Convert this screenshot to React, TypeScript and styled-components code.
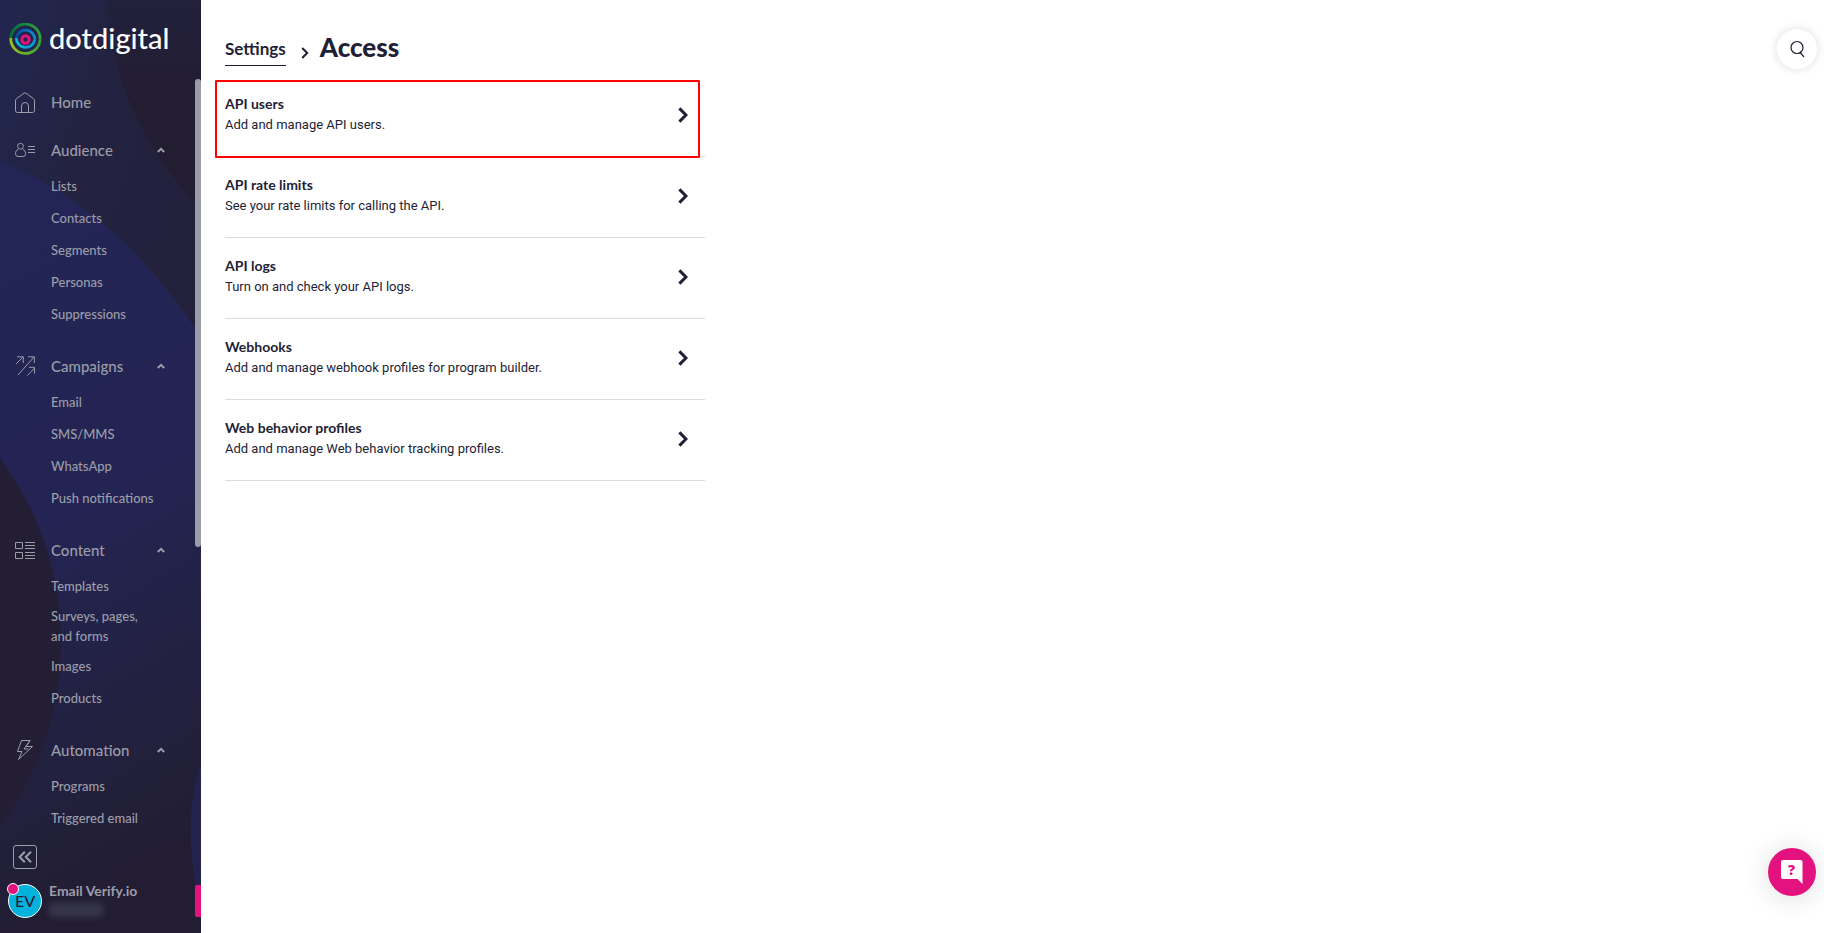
import React from "react";
import styled, { createGlobalStyle, css } from "styled-components";

const GlobalStyle = createGlobalStyle`
  *, *::before, *::after { box-sizing: border-box; }
  body { margin: 0; background: #fff; color: #221e35; font-family: Lato, "Liberation Sans", sans-serif; }
  a { color: inherit; text-decoration: none; }
  button { margin: 0; padding: 0; border: 0; background: none; color: inherit; font: inherit; cursor: pointer; }
  ul { margin: 0; padding: 0; list-style: none; }
  svg { display: block; }
`;

const Shell = styled.div`
  display: flex;
  min-height: 100vh;
`;

const Sidebar = styled.aside`
  position: sticky;
  top: 0;
  isolation: isolate;
  display: flex;
  flex-direction: column;
  flex: none;
  width: 201px;
  height: 100vh;
  overflow: hidden;
  color: #9b9da9;
`;

const Backdrop = styled.svg`
  position: absolute;
  inset: 0;
  z-index: -1;
  width: 100%;
  height: 100%;
`;

const Brand = styled.a`
  display: flex;
  align-items: center;
  flex: none;
  gap: 7px;
  height: 79px;
  padding-left: 9px;
  color: #fff;
`;

const BrandName = styled.span`
  padding-bottom: 4px;
  font-size: 29px;
  font-weight: 500;
  line-height: 32px;
`;

const NavArea = styled.div`
  display: flex;
  flex: 1;
  min-height: 0;
`;

const Nav = styled.nav`
  display: flex;
  flex: 1;
  flex-direction: column;
  gap: 8px;
  padding-top: 3px;
  overflow: hidden;
`;

const ScrollThumb = styled.div`
  width: 6px;
  height: 62%;
  border-radius: 3px;
  background: #9a9da8;
`;

const Section = styled.section`
  flex: none;
`;

const navHead = css`
  display: flex;
  align-items: center;
  flex: none;
  width: 100%;
  height: 40px;
  padding: 0 30px 0 14px;
  font-size: 15px;
  font-weight: 500;
  line-height: 20px;
  text-align: left;
`;

const HeadLink = styled.a`${navHead}`;
const HeadButton = styled.button`${navHead}`;

const HeadLabel = styled.span`
  flex: 1;
  padding-left: 15px;
`;

const SubList = styled.ul`
  padding: 0 0 8px 51px;
`;

const SubItem = styled.li`
  display: flex;
  align-items: center;
  min-height: 32px;
  padding: 4px 0;
`;

const ItemLink = styled.a`
  font-size: 13px;
  font-weight: 500;
  line-height: 20px;
  white-space: pre-line;
`;

const Footer = styled.footer`
  display: flex;
  flex: none;
  flex-direction: column;
  align-items: flex-start;
  gap: 15px;
  height: 99px;
  padding-top: 11px;
`;

const CollapseButton = styled.button`
  display: grid;
  place-items: center;
  width: 24px;
  height: 24px;
  margin-left: 13px;
  border: 1px solid #9b9da9;
  border-radius: 3px;
`;

const Account = styled.div`
  display: flex;
  align-items: center;
  align-self: stretch;
  height: 34px;
  padding-left: 8px;
`;

const Avatar = styled.button`
  position: relative;
  flex: none;
  width: 34px;
  height: 34px;
  border: 1px solid #fff;
  border-radius: 50%;
  background: #00b2dc;
  color: #221e35;
  font-size: 16px;
  font-weight: 500;
  line-height: 32px;
`;

const Alert = styled.span`
  position: absolute;
  top: -2px;
  left: -2px;
  width: 12px;
  height: 12px;
  border: 1px solid #fff;
  border-radius: 50%;
  background: #e3127e;
`;

const Identity = styled.div`
  flex: 1;
  padding: 0 0 2px 7px;
  font-size: 14px;
  font-weight: 700;
  line-height: 16px;
`;

const MaskedId = styled.div`
  width: 54px;
  height: 14px;
  margin-top: 4px;
  border-radius: 4px;
  background: #373649;
  filter: blur(3px);
`;

const Flag = styled.div`
  width: 6px;
  height: 32px;
  border-radius: 2px 0 0 2px;
  background: #e3127e;
`;

const Main = styled.main`
  flex: 1;
  min-width: 0;
  padding: 0 24px;
`;

const Crumbs = styled.header`
  display: flex;
  align-items: flex-start;
  height: 76px;
  padding-top: 31px;
`;

const CrumbLink = styled.a`
  margin-top: 6px;
  padding-bottom: 4px;
  border-bottom: 1px solid #221e35;
  font-size: 17px;
  font-weight: 700;
  line-height: 24px;
`;

const CrumbArrow = styled.svg`
  margin: 16px 11px 0 15px;
`;

const Title = styled.h1`
  margin: 0;
  font-size: 26px;
  font-weight: 900;
  line-height: 32px;
`;

const OptionList = styled.ul`
  max-width: 480px;
`;

const Option = styled.li<{ $marked?: boolean }>`
  position: relative;
  border-bottom: 1px solid #dcdcdf;
  ${({ $marked }) => $marked && css`
    &::after {
      content: "";
      position: absolute;
      inset: 4px 5px -2px -10px;
      border: 2px solid #ff0000;
      border-radius: 1px;
      pointer-events: none;
    }
  `}
`;

const OptionLink = styled.a`
  display: flex;
  align-items: center;
  justify-content: space-between;
  height: 80px;
  padding: 0 17px 2px 0;
`;

const OptionName = styled.h2`
  margin: 0;
  font-size: 14px;
  font-weight: 700;
  line-height: 20px;
`;

const OptionText = styled.p`
  margin: 0;
  padding: 1px 0;
  font-family: Roboto, "Liberation Sans", sans-serif;
  font-size: 13px;
  line-height: 20px;
`;

const floating = css`
  position: fixed;
  display: grid;
  place-items: center;
  border-radius: 50%;
`;

const SearchButton = styled.button`
  ${floating}
  top: 29px;
  right: 7px;
  width: 40px;
  height: 40px;
  background: #fff;
  box-shadow: 0 0 10px rgba(34, 30, 53, 0.15);
`;

const HelpButton = styled.button`
  ${floating}
  right: 8px;
  bottom: 37px;
  width: 48px;
  height: 48px;
  background: #e3127e;
  box-shadow: 0 2px 28px rgba(0, 0, 0, 0.14);
`;

const BubbleMark = styled.text`
  font-family: "Open Sans", sans-serif;
  font-size: 14px;
  font-weight: 800;
`;

const LogoMark = () => (
  <svg width="33" height="33" viewBox="0 0 33 33" fill="none" aria-hidden="true">
    <defs>
      <linearGradient id="ringGreen" x1="0" y1="0" x2="1" y2="0">
        <stop offset="0" stopColor="#00703c" />
        <stop offset="1" stopColor="#35a23a" />
      </linearGradient>
      <linearGradient id="ringLime" x1="0" y1="0" x2="1" y2="0">
        <stop offset="0" stopColor="#95c11f" />
        <stop offset="1" stopColor="#38a038" />
      </linearGradient>
      <linearGradient id="ringBlue" x1="0" y1="0" x2="1" y2="0">
        <stop offset="0" stopColor="#0a4a9e" />
        <stop offset="1" stopColor="#0a8fd0" />
      </linearGradient>
      <linearGradient id="ringCyan" x1="0" y1="0" x2="1" y2="0">
        <stop offset="0" stopColor="#00b9dc" />
        <stop offset="1" stopColor="#1192d2" />
      </linearGradient>
    </defs>
    <path d="M1.8 15A14.6 14.6 0 0 1 31.1 16.5" stroke="url(#ringGreen)" strokeWidth="2.8" />
    <path d="M31.1 16.5A14.6 14.6 0 0 1 1.8 15" stroke="url(#ringLime)" strokeWidth="2.8" />
    <path d="M7.3 15A9.3 9.3 0 0 1 25.8 16.5" stroke="url(#ringBlue)" strokeWidth="2.8" />
    <path d="M25.8 16.5A9.3 9.3 0 0 1 7.3 15" stroke="url(#ringCyan)" strokeWidth="2.8" />
    <circle cx="16.5" cy="16.5" r="3.7" stroke="#e3127e" strokeWidth="3" />
  </svg>
);

const iconShapes: Record<string, React.ReactNode> = {
  Home: <path d="M3.5 21.5Q1.5 21.5 1.5 19.5V9.2Q1.5 8.4 2.2 7.9L10 2.2Q11 1.5 12 2.2L19.8 7.9Q20.5 8.4 20.5 9.2V19.5Q20.5 21.5 18.5 21.5ZM7.5 21.5V15a3.5 3.5 0 0 1 7 0V21.5" />,
  Audience: (
    <>
      <circle cx="6.5" cy="7.2" r="2.9" />
      <path d="M4.4 10.3C2.5 11 1.4 12.5 1.5 14.8Q1.6 17.5 4 17.5H9.2Q11.6 17.5 11.6 14.8C11.6 12.5 10.5 11 8.6 10.3" />
      <path d="M14 7.5h7M14 10.5h7M14 13.5h7" />
    </>
  ),
  Campaigns: <path d="M2 9L9 2M3 1.8h6.3V8M4 20L20 2M14 1.8h6.3V8M13.5 20.5l7-7.5M15 12.3h5.5V18.5" />,
  Content: (
    <>
      <path d="M1.5 3.5h7v6h-7zM1.5 13.5h7v6h-7z" />
      <path d="M11 3.5h10M11 6.5h10M11 9.500h10M11 13.5h10M11 16.5h10M11 19.5h10" />
    </>
  ),
  Automation: <path d="M7.5 1.5H16L12 7.5h6.5L4.5 20.5 8 12.5H3.5ZM16 1.5L10 10h4.5" />,
};

const NavIcon = ({ name }: { name: string }) => (
  <svg width="22" height="22" viewBox="0 0 22 22" fill="none" stroke="currentColor" strokeWidth="1" aria-hidden="true">
    {iconShapes[name]}
  </svg>
);

const CaretUp = () => (
  <svg width="8" height="6" viewBox="0 0 8 6" fill="none" stroke="currentColor" strokeWidth="2" aria-hidden="true">
    <path d="M.8 5L4 1.8 7.2 5" />
  </svg>
);

const sections: { name: string; items: string[] }[] = [
  { name: "Audience", items: ["Lists", "Contacts", "Segments", "Personas", "Suppressions"] },
  { name: "Campaigns", items: ["Email", "SMS/MMS", "WhatsApp", "Push notifications"] },
  { name: "Content", items: ["Templates", "Surveys, pages,\nand forms", "Images", "Products"] },
  { name: "Automation", items: ["Programs", "Triggered email"] },
];

const options = [
  { name: "API users", text: "Add and manage API users.", marked: true },
  { name: "API rate limits", text: "See your rate limits for calling the API." },
  { name: "API logs", text: "Turn on and check your API logs." },
  { name: "Webhooks", text: "Add and manage webhook profiles for program builder." },
  { name: "Web behavior profiles", text: "Add and manage Web behavior tracking profiles." },
];

const SidebarArt = () => (
  <Backdrop viewBox="0 0 201 933" preserveAspectRatio="none" aria-hidden="true">
    <defs>
      <linearGradient id="base" x1="0" y1="0" x2="0.6" y2="1">
        <stop offset="0" stopColor="#22264f" />
        <stop offset="0.3" stopColor="#232240" />
        <stop offset="1" stopColor="#221e35" />
      </linearGradient>
      <linearGradient id="orb" x1="0" y1="0" x2="0.15" y2="1">
        <stop offset="0" stopColor="#232556" />
        <stop offset="0.5" stopColor="#232453" />
        <stop offset="0.85" stopColor="#22203c" />
        <stop offset="1" stopColor="#221d33" />
      </linearGradient>
      <linearGradient id="corner" x1="0" y1="0" x2="0" y2="1">
        <stop offset="0" stopColor="#22203c" />
        <stop offset="0.5" stopColor="#231d32" />
        <stop offset="1" stopColor="#231d32" />
      </linearGradient>
    </defs>
    <rect width="201" height="933" fill="url(#base)" />
    <path d="M107 0C110 78 142 146 201 210V0Z" fill="url(#corner)" />
    <path d="M0 161C84 195 150 258 201 337V933H0Z" fill="url(#orb)" />
    <circle cx="-247" cy="642" r="308" fill="#231e33" />
    <path d="M201 762C188 800 186 850 201 910Z" fill="#22224c" />
  </Backdrop>
);

export default function App() {
  return (
    <>
      <GlobalStyle />
      <Shell>
        <Sidebar>
          <SidebarArt />
          <Brand href="#">
            <LogoMark />
            <BrandName>dotdigital</BrandName>
          </Brand>
          <NavArea>
            <Nav aria-label="Main">
              <HeadLink href="#">
                <NavIcon name="Home" />
                <HeadLabel>Home</HeadLabel>
              </HeadLink>
              {sections.map((section) => (
                <Section key={section.name}>
                  <HeadButton type="button" aria-expanded="true">
                    <NavIcon name={section.name} />
                    <HeadLabel>{section.name}</HeadLabel>
                    <CaretUp />
                  </HeadButton>
                  <SubList>
                    {section.items.map((item) => (
                      <SubItem key={item}>
                        <ItemLink href="#">{item}</ItemLink>
                      </SubItem>
                    ))}
                  </SubList>
                </Section>
              ))}
            </Nav>
            <ScrollThumb />
          </NavArea>
          <Footer>
            <CollapseButton type="button" aria-label="Collapse menu">
              <svg width="14" height="12" viewBox="0 0 14 12" fill="none" stroke="currentColor" strokeWidth="2">
                <path d="M6.8.8L1.6 6l5.2 5.2M13 .8L7.8 6 13 11.2" />
              </svg>
            </CollapseButton>
            <Account>
              <Avatar type="button" aria-label="Account">
                EV
                <Alert />
              </Avatar>
              <Identity>
                Email Verify.io
                <MaskedId />
              </Identity>
              <Flag />
            </Account>
          </Footer>
        </Sidebar>

        <Main>
          <Crumbs>
            <CrumbLink href="#">Settings</CrumbLink>
            <CrumbArrow width="8" height="12" viewBox="0 0 8 12" fill="none" stroke="#221e35" strokeWidth="2" aria-hidden="true">
              <path d="M1.2 1L6.2 6l-5 5" />
            </CrumbArrow>
            <Title>Access</Title>
          </Crumbs>
          <OptionList>
            {options.map((option) => (
              <Option key={option.name} $marked={option.marked}>
                <OptionLink href="#">
                  <div>
                    <OptionName>{option.name}</OptionName>
                    <OptionText>{option.text}</OptionText>
                  </div>
                  <svg width="10" height="16" viewBox="0 0 10 16" fill="none" stroke="#221e35" strokeWidth="3" aria-hidden="true">
                    <path d="M1.4 1.4L8 8l-6.6 6.6" />
                  </svg>
                </OptionLink>
              </Option>
            ))}
          </OptionList>
        </Main>
      </Shell>

      <SearchButton type="button" aria-label="Search">
        <svg width="16" height="18" viewBox="0 0 16 18" fill="none" stroke="#221e35" strokeWidth="1.2" aria-hidden="true">
          <circle cx="8" cy="7.5" r="6" />
          <path d="M11.2 12.6L15 17M10.6 13.2l1.6-1.4" />
        </svg>
      </SearchButton>
      <HelpButton type="button" aria-label="Help">
        <svg width="22" height="24" viewBox="0 0 22 24" aria-hidden="true">
          <path d="M2 0h18q1.5 0 1.5 1.5V24l-5-5H2q-2 0-2-2V2q0-2 2-2z" fill="#fff" />
          <BubbleMark x="7" y="15" fill="#e3127e">?</BubbleMark>
        </svg>
      </HelpButton>
    </>
  );
}
